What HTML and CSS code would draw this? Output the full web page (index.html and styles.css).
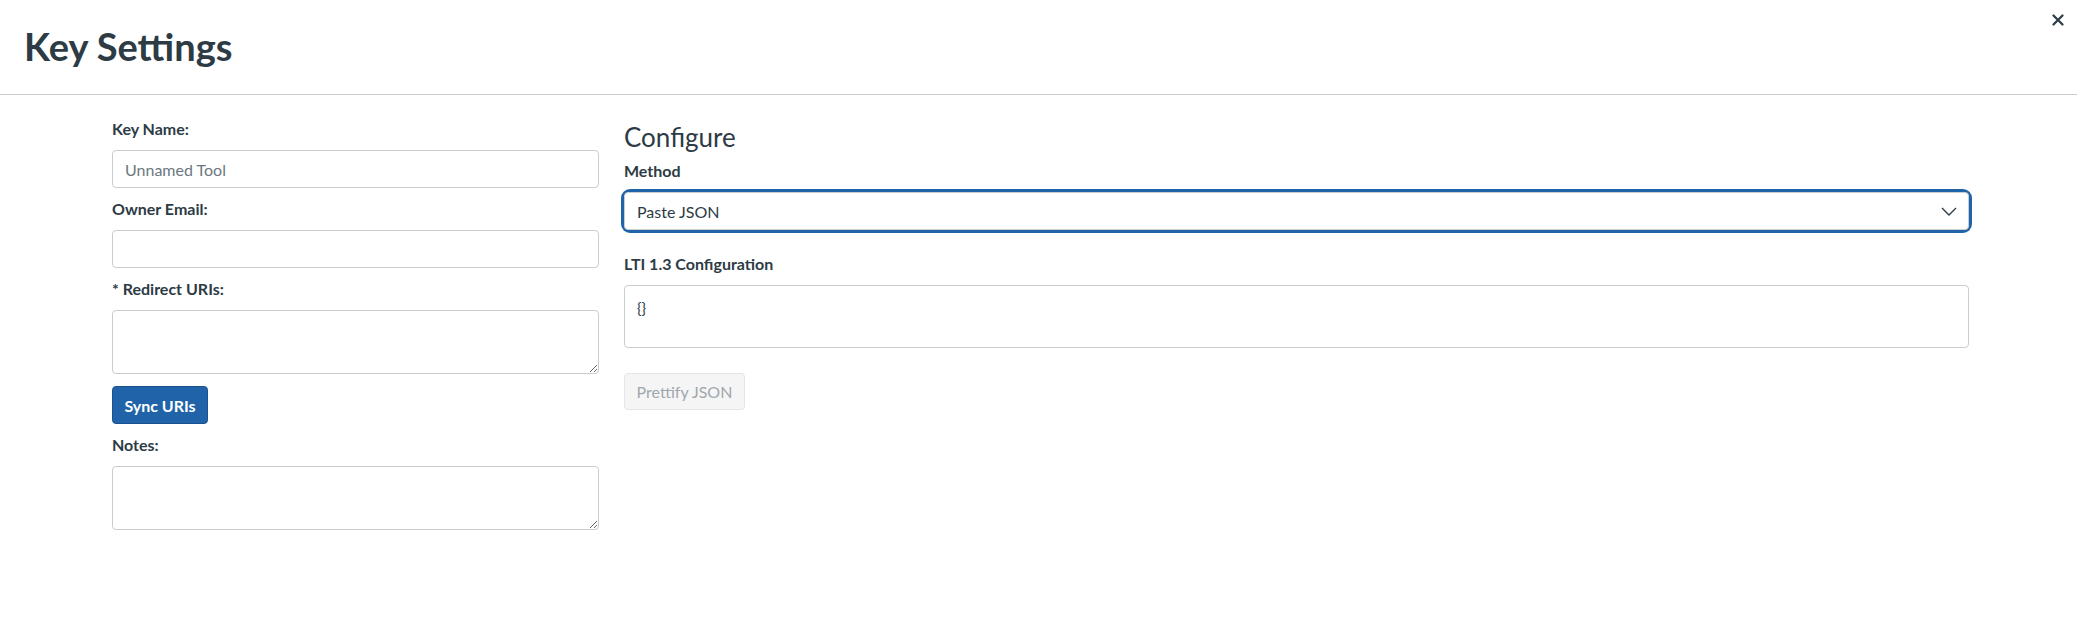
FILE: index.html
```html
<!DOCTYPE html>
<html lang="en">
<head>
<meta charset="utf-8">
<title>Key Settings</title>
<link rel="stylesheet" href="styles.css">
</head>
<body>
<div class="modal">
  <header class="modal-header">
    <h1 class="title">Key Settings</h1>
    <button class="close" aria-label="Close">
      <svg width="12" height="12" viewBox="0 0 12 12"><path d="M1.5 1.5 L10.5 10.5 M10.5 1.5 L1.5 10.5" stroke="#2d3b45" stroke-width="2.2" stroke-linecap="round" fill="none"/></svg>
    </button>
  </header>
  <main class="modal-body">
    <section class="col-left">
      <label class="label">Key Name:</label>
      <input class="input" type="text" placeholder="Unnamed Tool">
      <label class="label">Owner Email:</label>
      <input class="input" type="text">
      <label class="label">* Redirect URIs:</label>
      <textarea class="textarea"></textarea>
      <button class="btn-primary">Sync URIs</button>
      <label class="label">Notes:</label>
      <textarea class="textarea"></textarea>
    </section>
    <section class="col-right">
      <h2 class="heading">Configure</h2>
      <label class="label">Method</label>
      <div class="select-ring">
        <div class="select">
          <span class="select-text">Paste JSON</span>
          <svg class="chevron" width="16" height="9" viewBox="0 0 16 9"><path d="M1 1 L8 8 L15 1" stroke="#2d3b45" stroke-width="1.4" fill="none"/></svg>
        </div>
      </div>
      <label class="label label-lti">LTI 1.3 Configuration</label>
      <textarea class="textarea json">{}</textarea>
      <button class="btn-disabled" disabled>Prettify JSON</button>
    </section>
  </main>
</div>
</body>
</html>
```
FILE: styles.css
```css
* { box-sizing: border-box; }
html, body { margin: 0; padding: 0; background: #fff; }
body {
  font-family: Lato, "Noto Sans", sans-serif;
  color: #2d3b45;
  font-size: 16px;
}
.modal { position: relative; }
.modal-header {
  position: relative;
  height: 95px;
  padding: 22px 24px 0 24px;
  border-bottom: 1px solid #c7cdd1;
}
.title {
  margin: 0;
  font-size: 38px;
  line-height: 48px;
  font-weight: 700;
  color: #2d3b45;
}
.close {
  position: absolute;
  top: 14px;
  right: 13px;
  width: 12px;
  height: 12px;
  padding: 0;
  border: 0;
  background: none;
  display: flex;
}
.modal-body {
  display: grid;
  grid-template-columns: 487px 1345px;
  column-gap: 25px;
  padding: 22px 0 0 112px;
}
.col-left, .col-right {
  display: flex;
  flex-direction: column;
  align-items: flex-start;
}
.label {
  display: block;
  font-size: 16px;
  line-height: 24px;
  font-weight: 700;
  margin-bottom: 9px;
}
.input {
  width: 100%;
  height: 38px;
  border: 1px solid #c7cdd1;
  border-radius: 4px;
  padding: 0 12px;
  font-family: Lato, sans-serif;
  font-size: 16px;
  color: #2d3b45;
  margin-bottom: 9px;
  outline: none;
}
.input::placeholder { color: #6b7780; }
.textarea {
  width: 100%;
  height: 64px;
  border: 1px solid #c7cdd1;
  border-radius: 4px;
  padding: 12px;
  font-family: Lato, sans-serif;
  font-size: 15px;
  line-height: 21px;
  color: #2d3b45;
  margin: 0 0 12px 0;
  resize: vertical;
  outline: none;
  display: block;
}
.btn-primary {
  height: 38px;
  width: 96px;
  padding: 0;
  background: #2063a8;
  border: 1px solid #1a5290;
  border-radius: 4px;
  color: #fff;
  font-family: Lato, sans-serif;
  font-size: 16px;
  font-weight: 700;
  margin-bottom: 9px;
}
.heading {
  margin: 4px 0 6px 0;
  font-size: 26px;
  line-height: 32px;
  font-weight: 400;
}
.select-ring {
  width: 100%;
  border-radius: 6px;
  box-shadow: 0 0 0 3px #2063a8;
  margin-top: 0;
}
.select {
  height: 38px;
  border: 1px solid #c7cdd1;
  border-radius: 4px;
  display: flex;
  align-items: center;
  justify-content: space-between;
  padding: 0 11px 0 12px;
  background: #fff;
}
.select-text { font-size: 16px; }
.chevron { display: block; }
.label-lti { margin-top: 22px; margin-bottom: 9px; }
.json { height: 63px; margin-bottom: 25px; resize: none; }
.btn-disabled {
  height: 37px;
  width: 121px;
  padding: 0;
  background: #f5f5f5;
  border: 1px solid #e3e5e7;
  border-radius: 4px;
  color: #a0a7ad;
  font-family: Lato, sans-serif;
  font-size: 16px;
  font-weight: 400;
}
```
